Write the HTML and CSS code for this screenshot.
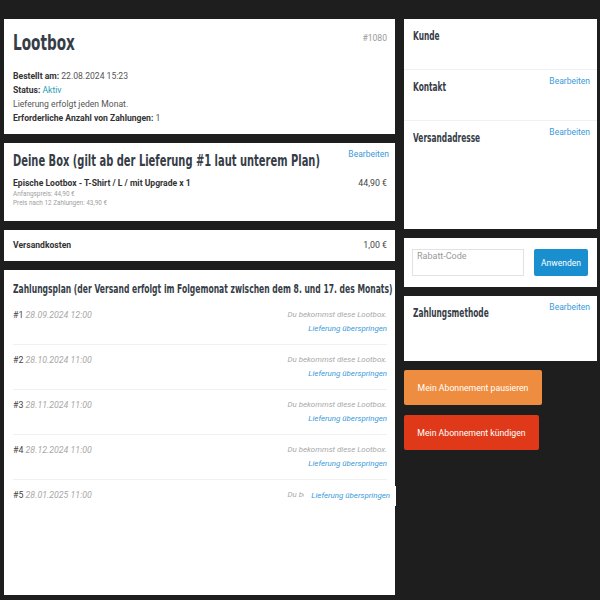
FILE: index.html
```html
<!DOCTYPE html>
<html lang="de">
<head>
  <meta charset="UTF-8">
  <title>Lootbox</title>
  <link rel="stylesheet" href="styles.css">
</head>
<body>

<div class="page">

  <!--linke Spalte-->
  <div class="main">

    <section class="card order">
      <div class="order-head">
        <h1>Lootbox</h1>
        <span class="order-no">#1080</span>
      </div>
      <p><b>Bestellt am:</b> 22.08.2024 15:23</p>
      <p><b>Status:</b> <span class="status">Aktiv</span></p>
      <p>Lieferung erfolgt jeden Monat.</p>
      <p><b>Erforderliche Anzahl von Zahlungen:</b> 1</p>
    </section>

    <section class="card box">
      <a class="edit" href="#">Bearbeiten</a>
      <h2>Deine Box (gilt ab der Lieferung #1 laut unterem Plan)</h2>
      <div class="line">
        <b>Epische Lootbox - T-Shirt / L / mit Upgrade x 1</b>
        <span>44,90 €</span>
      </div>
      <small>Anfangspreis: 44,90 €</small>
      <small>Preis nach 12 Zahlungen: 43,90 €</small>
    </section>

    <section class="card shipping">
      <div class="line">
        <b>Versandkosten</b>
        <span>1,00 €</span>
      </div>
    </section>

    <section class="card plan">
      <h3>Zahlungsplan (der Versand erfolgt im Folgemonat zwischen dem 8. und 17. des Monats)</h3>
      <ul class="plan-list">
        <li class="plan-row">
          <div class="plan-date"><span class="num">#1</span> <i>28.09.2024 12:00</i></div>
          <div class="plan-info">
            <i class="note">Du bekommst diese Lootbox.</i>
            <a class="skip" href="#">Lieferung überspringen</a>
          </div>
        </li>
        <li class="plan-row">
          <div class="plan-date"><span class="num">#2</span> <i>28.10.2024 11:00</i></div>
          <div class="plan-info">
            <i class="note">Du bekommst diese Lootbox.</i>
            <a class="skip" href="#">Lieferung überspringen</a>
          </div>
        </li>
        <li class="plan-row">
          <div class="plan-date"><span class="num">#3</span> <i>28.11.2024 11:00</i></div>
          <div class="plan-info">
            <i class="note">Du bekommst diese Lootbox.</i>
            <a class="skip" href="#">Lieferung überspringen</a>
          </div>
        </li>
        <li class="plan-row">
          <div class="plan-date"><span class="num">#4</span> <i>28.12.2024 11:00</i></div>
          <div class="plan-info">
            <i class="note">Du bekommst diese Lootbox.</i>
            <a class="skip" href="#">Lieferung überspringen</a>
          </div>
        </li>
        <li class="plan-row last">
          <div class="plan-date"><span class="num">#5</span> <i>28.01.2025 11:00</i></div>
          <div class="plan-info">
            <i class="note">Du bekommst diese Lootbox.</i>
            <a class="skip lifted" href="#">Lieferung überspringen</a>
          </div>
        </li>
      </ul>
    </section>

  </div>

  <!--rechte Spalte-->
  <aside class="side">

    <section class="card info">
      <div class="info-part">
        <h4>Kunde</h4>
      </div>
      <div class="info-part">
        <a class="edit" href="#">Bearbeiten</a>
        <h4>Kontakt</h4>
      </div>
      <div class="info-part grow">
        <a class="edit" href="#">Bearbeiten</a>
        <h4>Versandadresse</h4>
      </div>
    </section>

    <section class="card coupon">
      <input class="coupon-input" type="text" placeholder="Rabatt-Code">
      <button class="btn btn-blue">Anwenden</button>
    </section>

    <section class="card info payment">
      <div class="info-part grow">
        <a class="edit" href="#">Bearbeiten</a>
        <h4>Zahlungsmethode</h4>
      </div>
    </section>

    <button class="btn btn-big btn-orange">Mein Abonnement pausieren</button>
    <button class="btn btn-big btn-red">Mein Abonnement kündigen</button>

  </aside>
</div>

</body>
</html>
```

FILE: styles.css
```css
* {
  margin: 0;
  padding: 0;
  list-style: none;
  box-sizing: border-box;
}

body {
  background-color: #1e1e1e;
  font-family: Roboto, "Noto Sans", sans-serif;
  font-size: 8.6px;
  color: #555;
}

a {
  text-decoration: none;
  color: #3a9ad9;
}

/*zwei Spalten*/
.page {
  display: grid;
  grid-template-columns: 391px 193px;
  column-gap: 9px;
  padding: 19px 3px 0 4px;
  height: 595px;
}

.main,
.side {
  display: flex;
  flex-direction: column;
  gap: 9px;
}

.card {
  background-color: #fff;
  padding: 8px 8px 9px 9px;
}

/*schmale Ueberschrift: breite Schrift wird gestaucht*/
h1, h2, h3, h4 {
  font-family: "DejaVu Sans", sans-serif;
  font-weight: bold;
  color: #363d47;
  white-space: nowrap;
  transform: scaleX(0.62);
  transform-origin: left center;
}

.edit {
  float: right;
  font-size: 8.5px;
  line-height: 12px;
}

.line {
  display: flex;
  justify-content: space-between;
  line-height: 14px;
}

.line b {
  color: #333;
}

.line span {
  color: #444;
  font-size: 8.8px;
}

/*Bestellung*/
.order {
  padding-top: 10px;
}

.order-head {
  display: flex;
  justify-content: space-between;
  align-items: flex-start;
  margin-bottom: 12px;
}

.order h1 {
  font-size: 22px;
  line-height: 28px;
}

.order-no {
  color: #9a9a9a;
  font-size: 8.6px;
  line-height: 14px;
  margin-top: 2px;
}

.order p {
  line-height: 14px;
}

.order b {
  color: #333;
}

.status {
  color: #1f9bb3;
}

/*Box*/
.box {
  padding-top: 4px;
  padding-bottom: 13px;
}

.box .edit {
  line-height: 14px;
  margin-right: -2px;
}

.box h2 {
  font-size: 16px;
  line-height: 20px;
  margin-top: 4px;
  margin-bottom: 5px;
}

.box small {
  display: block;
  font-size: 6.4px;
  line-height: 9px;
  color: #a0a0a0;
}

.shipping {
  padding-bottom: 9px;
}

/*Zahlungsplan*/
.plan {
  flex: 1;
  padding-top: 10px;
}

.plan h3 {
  font-size: 12.3px;
  line-height: 18px;
  margin-bottom: 2px;
}

.plan-row {
  display: flex;
  justify-content: space-between;
  padding: 8px 0;
  border-bottom: 1px solid #f0f0f0;
}

.plan-row.last {
  border-bottom: none;
}

.plan-date {
  font-size: 8.8px;
  line-height: 14px;
}

.plan-date .num {
  color: #444;
}

.plan-date i {
  color: #a8a8a8;
}

.plan-info {
  position: relative;
  display: flex;
  flex-direction: column;
  align-items: flex-end;
  line-height: 14px;
}

.note {
  font-size: 7.9px;
  color: #a8a8a8;
}

.skip {
  font-style: italic;
  font-size: 7.9px;
}

/*Link liegt ueber dem Hinweis*/
.skip.lifted {
  position: absolute;
  top: -2px;
  right: -9px;
  background-color: #fff;
  padding: 3px 6px 3px 7px;
  white-space: nowrap;
}

/*rechte Spalte*/
.info {
  display: flex;
  flex-direction: column;
  padding: 0;
  height: 210px;
}

.info-part {
  height: 51px;
  padding: 5px 7px 0 9px;
  border-bottom: 1px solid #f0f0f0;
}

.info-part.grow {
  flex: 1;
  border-bottom: none;
}

.info h4 {
  font-size: 12px;
  line-height: 14px;
  margin-top: 5px;
}

.payment {
  height: 65px;
}

.coupon {
  display: flex;
  gap: 10px;
  padding: 11px 9px 11px 8px;
}

.coupon-input {
  width: 112px;
  height: 27px;
  border: 1px solid #e2e2e2;
  padding: 0 4px 13px;
  font-family: Roboto, sans-serif;
  font-size: 9px;
  outline: none;
}

.coupon-input::placeholder {
  color: #999;
}

.btn {
  border: none;
  border-radius: 2px;
  color: #fff;
  font-family: Roboto, "Noto Sans", sans-serif;
  font-size: 8.7px;
  cursor: pointer;
}

.btn-blue {
  width: 54px;
  height: 27px;
  font-size: 8.5px;
  background-color: #1a8fd0;
}

.btn-big {
  height: 35px;
  align-self: flex-start;
}

.btn-orange {
  width: 138px;
  background-color: #ee8d3f;
}

.btn-red {
  width: 135px;
  margin-top: 1px;
  background-color: #e0391a;
}
```
